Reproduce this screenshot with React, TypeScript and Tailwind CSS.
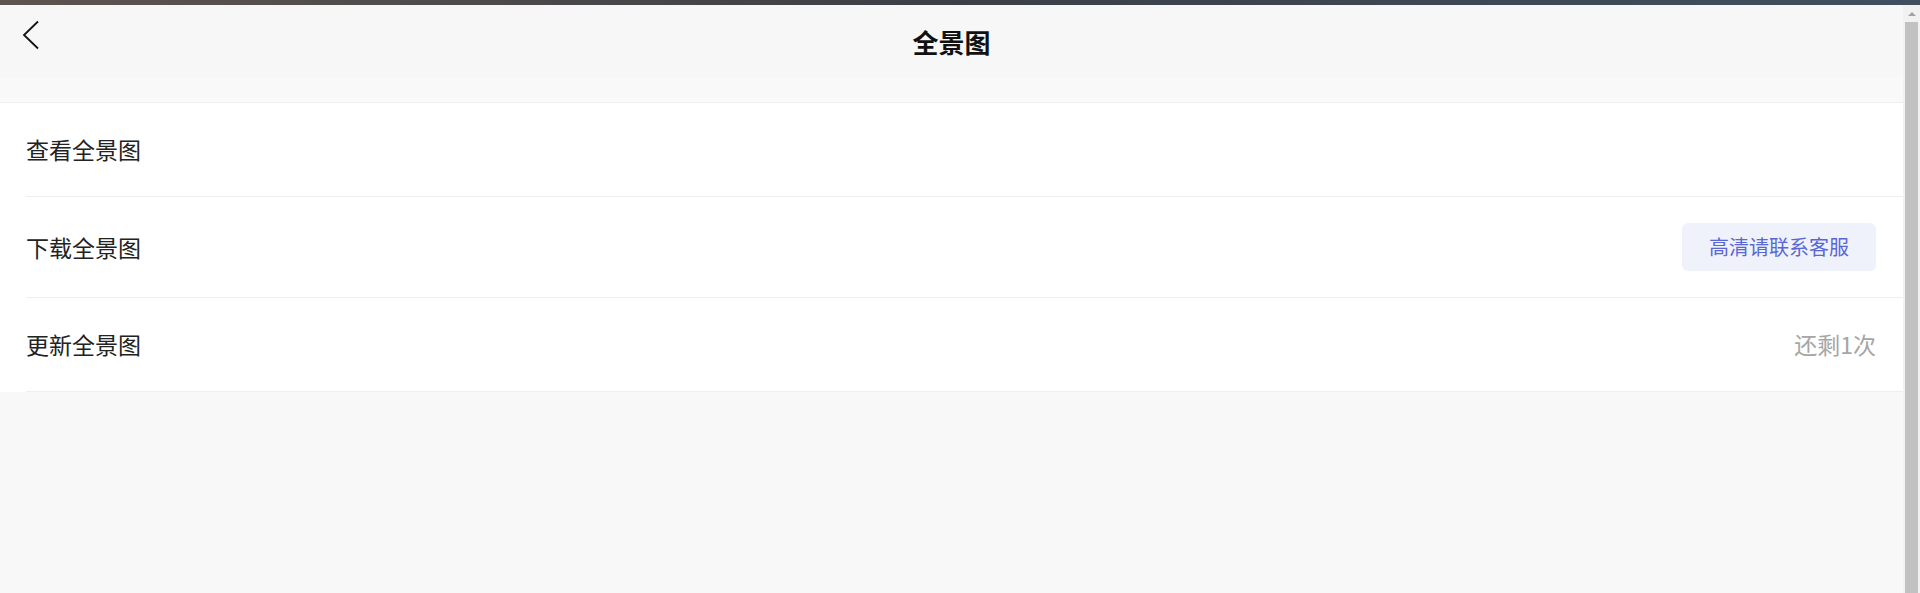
const rows = [
  { label: "查看全景图", height: "h-[94px]" },
  { label: "下载全景图", height: "h-[101px]", action: "button" },
  { label: "更新全景图", height: "h-[94px]", action: "left" },
];

function BackIcon() {
  return (
    <svg width="18" height="30" viewBox="0 0 18 30" fill="none">
      <path d="M16 1.5L2 15l14 13.5" stroke="#111" strokeWidth="1.8" />
    </svg>
  );
}

export default function App() {
  return (
    <div
      className="flex h-[593px] w-[1920px] flex-col overflow-hidden bg-[#f8f8f8]"
      style={{ fontFamily: '"Noto Sans CJK SC", "Noto Sans", sans-serif' }}
    >
      {/* browser edge */}
      <div className="h-[5px] bg-gradient-to-r from-[#5e5450] via-[#3c3f46] to-[#405060]" />

      <div className="flex flex-1">
        <div className="flex flex-1 flex-col">
          {/* Header */}
          <div className="grid h-[72px] grid-cols-[1fr_auto_1fr] bg-[#f7f7f7]">
            <div className="pl-[22px] pt-[15px]">
              <BackIcon />
            </div>
            <h1 className="pt-[19px] text-[26px] font-bold leading-[36px] text-[#111]">
              全景图
            </h1>
            <div />
          </div>
          <div className="h-[25px] bg-[#f9f9f9]" />

          {/* List */}
          <div className="border-t border-[#eeeeee] bg-white">
            {rows.map((row) => (
              <div
                key={row.label}
                className={`ml-[26px] flex items-center justify-between border-b border-[#eeeeee] pr-[27px] ${row.height}`}
              >
                <span className="text-[23px] text-[#222]">{row.label}</span>
                {row.action === "button" && (
                  <button className="h-[48px] rounded-[6px] bg-[#eff2fb] px-[27px] text-[20px] text-[#5966d6]">
                    高清请联系客服
                  </button>
                )}
                {row.action === "left" && (
                  <span className="text-[23px] text-[#a6a6a6]">还剩1次</span>
                )}
              </div>
            ))}
          </div>
        </div>

        {/* scrollbar */}
        <div className="flex w-[17px] flex-col bg-[#f1f1f1]">
          <div className="flex h-[17px] items-center justify-center">
            <div className="h-0 w-0 border-x-[4px] border-b-[4px] border-x-transparent border-b-[#a3a3a3]" />
          </div>
          <div className="ml-[2px] mr-[2px] flex-1 bg-[#c1c1c1]" />
        </div>
      </div>
    </div>
  );
}
